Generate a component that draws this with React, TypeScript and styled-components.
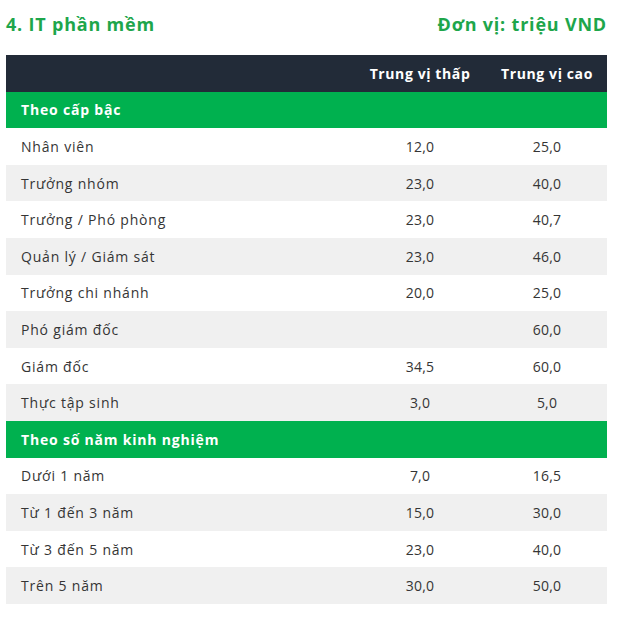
import styled, { createGlobalStyle } from "styled-components";

const GlobalStyle = createGlobalStyle`
  body {
    margin: 0;
    background: #ffffff;
    font-family: "Open Sans", "Liberation Sans", sans-serif;
  }
`;

const Page = styled.div`
  width: 620px;
  height: 623px;
  padding: 12px 13px 0 6px;
  box-sizing: border-box;
`;

const TitleBar = styled.div`
  display: flex;
  justify-content: space-between;
  align-items: center;
  height: 24px;
  margin-bottom: 19px;
  color: #1ea64b;
  font-size: 18px;
  font-weight: 700;
  letter-spacing: 0.8px;
`;

const Table = styled.div`
  display: flex;
  flex-direction: column;
`;

const Row = styled.div<{ $tone: "dark" | "green" | "gray" | "white" }>`
  display: grid;
  grid-template-columns: 1fr 134px 120px;
  align-items: center;
  height: 36.6px;
  background: ${({ $tone }) =>
    $tone === "dark"
      ? "#222b38"
      : $tone === "green"
      ? "#00b14f"
      : $tone === "gray"
      ? "#f0f0f0"
      : "#ffffff"};
  color: ${({ $tone }) => ($tone === "dark" || $tone === "green" ? "#ffffff" : "#353535")};
  font-size: 14px;
  font-weight: ${({ $tone }) => ($tone === "dark" || $tone === "green" ? 700 : 400)};
`;

const Label = styled.div`
  padding-left: 15px;
  letter-spacing: 0.8px;
`;

const Cell = styled.div<{ $head?: boolean }>`
  text-align: center;
  letter-spacing: ${({ $head }) => ($head ? "0.6px" : "0.2px")};
`;

type Item = [string, string, string];

const byLevel: Item[] = [
  ["Nhân viên", "12,0", "25,0"],
  ["Trưởng nhóm", "23,0", "40,0"],
  ["Trưởng / Phó phòng", "23,0", "40,7"],
  ["Quản lý / Giám sát", "23,0", "46,0"],
  ["Trưởng chi nhánh", "20,0", "25,0"],
  ["Phó giám đốc", "", "60,0"],
  ["Giám đốc", "34,5", "60,0"],
  ["Thực tập sinh", "3,0", "5,0"],
];

const byYears: Item[] = [
  ["Dưới 1 năm", "7,0", "16,5"],
  ["Từ 1 đến 3 năm", "15,0", "30,0"],
  ["Từ 3 đến 5 năm", "23,0", "40,0"],
  ["Trên 5 năm", "30,0", "50,0"],
];

const Section = ({ title, items }: { title: string; items: Item[] }) => (
  <>
    <Row $tone="green">
      <Label>{title}</Label>
    </Row>
    {items.map(([name, low, high], i) => (
      <Row key={name} $tone={i % 2 ? "gray" : "white"}>
        <Label>{name}</Label>
        <Cell>{low}</Cell>
        <Cell>{high}</Cell>
      </Row>
    ))}
  </>
);

const App = () => {
  return (
    <Page>
      <GlobalStyle />
      <TitleBar>
        <span>4. IT phần mềm</span>
        <span>Đơn vị: triệu VND</span>
      </TitleBar>
      <Table>
        <Row $tone="dark">
          <span />
          <Cell $head>Trung vị thấp</Cell>
          <Cell $head>Trung vị cao</Cell>
        </Row>
        <Section title="Theo cấp bậc" items={byLevel} />
        <Section title="Theo số năm kinh nghiệm" items={byYears} />
      </Table>
    </Page>
  );
};

export default App;
